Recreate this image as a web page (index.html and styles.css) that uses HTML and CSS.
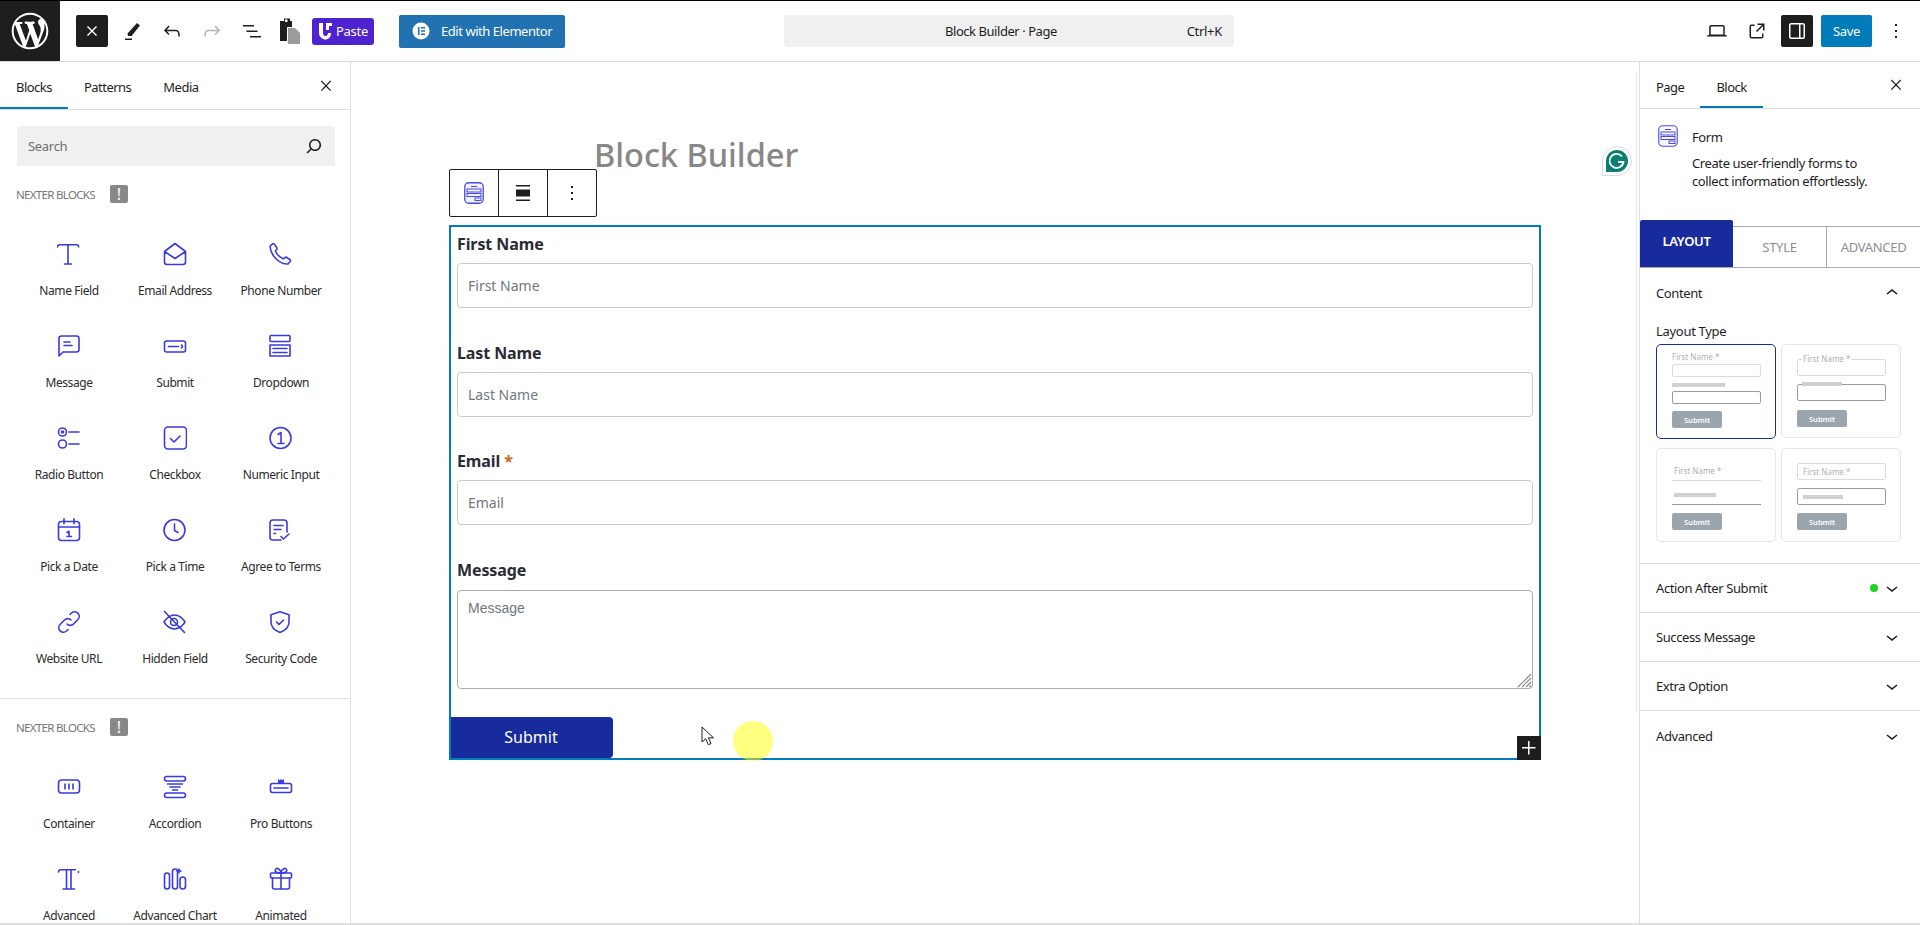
FILE: index.html
```html
<!DOCTYPE html>
<html lang="en">
<head>
<meta charset="utf-8">
<title>Block Builder</title>
<link rel="stylesheet" href="styles.css">
</head>
<body>
<div class="app">
<header class="topbar">
  <div class="wp-logo"><svg width="44" height="44" viewBox="-2 -2 24 24"><path fill="#fff" d="M20 10c0-5.51-4.49-10-10-10C4.48 0 0 4.49 0 10c0 5.52 4.48 10 10 10 5.51 0 10-4.48 10-10zM7.78 15.37L4.37 6.22c.55-.02 1.17-.08 1.17-.08.5-.06.44-1.13-.06-1.11 0 0-1.45.11-2.37.11-.18 0-.37 0-.58-.01C4.12 2.69 6.87 1.11 10 1.11c2.33 0 4.45.87 6.05 2.34-.68-.11-1.65.39-1.65 1.58 0 .74.45 1.36.9 2.1.35.61.55 1.36.55 2.46 0 1.49-1.4 5-1.4 5l-3.03-8.37c.54-.02.82-.17.82-.17.5-.05.44-1.25-.06-1.22 0 0-1.44.12-2.38.12-.87 0-2.33-.12-2.33-.12-.5-.03-.56 1.2-.06 1.22l.92.08 1.26 3.41zM17.41 10c.24-.64.74-1.87.43-4.25.7 1.29 1.05 2.71 1.05 4.25 0 3.29-1.73 6.24-4.4 7.78.97-2.59 1.94-5.2 2.92-7.78zM6.1 18.09C3.12 16.65 1.11 13.53 1.11 10c0-1.3.23-2.48.72-3.59C3.25 10.3 4.67 14.2 6.1 18.09zm4.03-6.63l2.58 6.98c-.86.29-1.76.45-2.71.45-.79 0-1.57-.11-2.29-.33.81-2.38 1.62-4.74 2.42-7.1z"/></svg></div>
  <div class="dark-btn close-btn"><svg width="24" height="24" viewBox="0 0 24 24"><path fill="#fff" d="M8 7l4 4 4-4 1 1-4 4 4 4-1 1-4-4-4 4-1-1 4-4-4-4z"/></svg></div>
  <div class="tools">
    <svg class="tool" viewBox="0 0 24 24"><path fill="#1e1e1e" d="M17 4l3 2.500-8.500 10.500h-3.500l-.5-2.500zM5 19.500h7v1.500h-7z"/></svg>
    <svg class="tool" viewBox="0 0 24 24"><path fill="#1e1e1e" d="M18.300 11.700c-.6-.6-1.400-.9-2.300-.9H6.700l2.900-3.300-1.100-1-4.500 5L8.500 16l1-1-2.700-2.700H16c.5 0 .9.200 1.300.5 1 1 1 3.400 1 4.500v.3h1.500v-.2c0-1.500 0-4.300-1.500-5.700z"/></svg>
    <svg class="tool" viewBox="0 0 24 24"><path fill="#b4b4b4" d="M15.600 6.500l-1.100 1 2.900 3.300H8c-.9 0-1.700.3-2.300.9-1.400 1.500-1.400 4.200-1.400 5.600v.2h1.500v-.3c0-1.100 0-3.500 1-4.500.3-.3.7-.5 1.300-.5h9.200L14.500 15l1.100 1.100 4.600-4.600-4.600-5z"/></svg>
    <svg class="tool" viewBox="0 0 24 24"><path fill="#1e1e1e" d="M3 6h11v1.500H3V6Zm3.500 5.500h11V13h-11v-1.500ZM21 17H10v1.500h11V17Z"/></svg>
  </div>
  <svg class="clip" width="24" height="28" viewBox="0 0 24 28"><path fill="#1e1e1e" d="M2 4h4V1.500h6V4h2v6h-5v14H2z"/><path fill="#9b9b9b" d="M10 11h7l5 5v11H10z"/><path fill="#fff" d="M7 2.500h2.500V5H7z"/></svg>
  <div class="paste"><svg width="16" height="20" viewBox="0 0 16 20"><path fill="#fff" d="M1 2h4v10c0 2 1 3 2.500 3S10 14 10 12h3c0 4-2.500 6.500-5.500 6.500S1 16 1 12z"/><path fill="#fff" d="M8 2h6v3H11v4H8z"/></svg><span>Paste</span></div>
  <div class="elementor"><svg width="18" height="18" viewBox="0 0 18 18"><circle cx="9" cy="9" r="8.500" fill="#fff"/><path fill="#2271b1" d="M6 5h1.500v8H6zM9 5h4v1.500H9zM9 8.250h4v1.500H9zM9 11.500h4V13H9z"/></svg><span>Edit with Elementor</span></div>
  <div class="command"><span class="command-title">Block Builder · Page</span><span class="command-key">Ctrl+K</span></div>
  <div class="top-right">
    <svg class="tool" viewBox="0 0 24 24"><path fill="#1e1e1e" d="M20.500 16h-.7V8c0-1.100-.9-2-2-2H6.200c-1.100 0-2 .9-2 2v8h-.7c-.8 0-1.500.7-1.500 1.500h20c0-.8-.7-1.500-1.500-1.500zM5.700 8c0-.3.2-.5.500-.5h11.600c.3 0 .5.2.5.5v7.600H5.700V8z"/></svg>
    <svg class="tool ext" viewBox="0 0 24 24"><path fill="#1e1e1e" d="M19.500 4.500h-7V6h4.440l-5.970 5.970 1.060 1.060L18 7.060v4.440h1.500v-7Zm-13 1a2 2 0 0 0-2 2v10a2 2 0 0 0 2 2h10a2 2 0 0 0 2-2v-3H17v3a.5.5 0 0 1-.5.5h-10a.5.5 0 0 1-.5-.5v-10a.5.5 0 0 1 .5-.5h3V5.500h-3Z"/></svg>
    <div class="dark-btn panel-btn"><svg width="24" height="24" viewBox="0 0 24 24"><path fill="#fff" d="M18 4H6c-1.100 0-2 .9-2 2v12c0 1.100.9 2 2 2h12c1.100 0 2-.9 2-2V6c0-1.100-.9-2-2-2zm-4 14.500H6c-.3 0-.5-.2-.5-.5V6c0-.3.2-.5.5-.5h8v13zm4.500-.5c0 .3-.2.5-.5.5h-2.500v-13H18c.3 0 .5.2.5.5v12z"/></svg></div>
    <div class="save">Save</div>
    <svg class="tool dots" viewBox="0 0 24 24"><path fill="#1e1e1e" d="M13 19h-2v-2h2v2zm0-6h-2v-2h2v2zm0-6h-2V5h2v2z"/></svg>
  </div>
</header>

<div class="workspace">
<aside class="inserter">
  <div class="tabs left-tabs">
    <div class="tab active">Blocks</div>
    <div class="tab">Patterns</div>
    <div class="tab">Media</div>
    <svg class="tab-close" width="20" height="20" viewBox="0 0 24 24"><path fill="#1e1e1e" d="M13 11.800l5.100-5.300-1-1-5.100 5.200-5.100-5.200-1 1 5.100 5.300-5.100 5.200 1 1 5.100-5.100 5.100 5.100 1-1z"/></svg>
  </div>
  <div class="search"><span>Search</span><svg width="24" height="24" viewBox="0 0 24 24"><path fill="#1e1e1e" d="M13 5c-3.300 0-6 2.700-6 6 0 1.400.5 2.700 1.300 3.700l-3.800 3.800 1.100 1.100 3.800-3.800c1 .8 2.300 1.300 3.700 1.300 3.300 0 6-2.700 6-6S16.300 5 13 5zm0 10.500c-2.500 0-4.500-2-4.500-4.500s2-4.500 4.500-4.500 4.500 2 4.500 4.500-2 4.500-4.500 4.500z"/></svg></div>
  <div class="group-head"><span>NEXTER BLOCKS</span><b class="badge">!</b></div>
  <div class="blocks divided">
    <div class="block"><svg class="ic" viewBox="0 0 24 24"><path d="M.5 5c0-1.500 1-2.200 2-2.200h17c1 0 2 .7 2 2.200M11 2.800V22M7.500 22h7"/></svg><span>Name Field</span></div>
    <div class="block"><svg class="ic" viewBox="0 0 24 24"><path d="M1.500 9.500 12 1.500l10.500 8V20a2.500 2.500 0 0 1-2.500 2.500H4A2.500 2.500 0 0 1 1.500 20ZM1.500 9.500 12 16.500l10.500-7"/></svg><span>Email Address</span></div>
    <div class="block"><svg class="ic" viewBox="0 0 24 24"><path d="M3.500 1.800 1.200 4C.5 12 10 22.500 19 22l2-2.200c.8-.9.500-1.800-.2-2.300l-3-2c-.8-.5-1.500-.4-2.100.2l-1.200 1.200C11 15.500 7.700 12 6.300 9l1.200-1.200c.6-.6.700-1.300.2-2.100l-2-3.200c-.5-.8-1.500-1.300-2.200-.7Z"/></svg><span>Phone Number</span></div>
    <div class="block"><svg class="ic" viewBox="0 0 24 24"><path d="M4.500 2h15A2.500 2.500 0 0 1 22 4.500v11a2.500 2.500 0 0 1-2.500 2.500H6l-4 4V4.500A2.500 2.500 0 0 1 4.500 2ZM7 8h6M7 11.500h8"/></svg><span>Message</span></div>
    <div class="block"><svg class="ic" viewBox="0 0 24 24"><rect x="1.500" y="7" width="21" height="11" rx="2"/><path d="M5.500 12.500h10M18.500 11l1 1.500-1 1.500"/></svg><span>Submit</span></div>
    <div class="block"><svg class="ic" viewBox="0 0 24 24"><rect x="1" y="1.500" width="20" height="6" rx="1"/><rect x="1" y="11" width="20" height="11"/><path d="M4 14.500h14M4 18.500h14"/></svg><span>Dropdown</span></div>
    <div class="block"><svg class="ic" viewBox="0 0 24 24"><circle cx="5.500" cy="6" r="4"/><circle class="dot" cx="5.500" cy="6" r="1.800"/><circle cx="5.500" cy="18" r="4"/><path d="M12 6h10M12 18h10"/></svg><span>Radio Button</span></div>
    <div class="block"><svg class="ic" viewBox="0 0 24 24"><rect x="1.500" y="1" width="22" height="22" rx="3.500"/><path d="M7.500 12.500l3.500 3.500 6-6"/></svg><span>Checkbox</span></div>
    <div class="block"><svg class="ic" viewBox="0 0 24 24"><circle cx="11.500" cy="12" r="10.500"/><path d="M9 8.500 12 6.500V17.500M9 17.500h6"/></svg><span>Numeric Input</span></div>
    <div class="block"><svg class="ic" viewBox="0 0 24 24"><rect x="1.500" y="3.500" width="21" height="19" rx="3"/><path d="M1.500 9h21M7 .8v5M17 .8v5M10 14.500l2-1.200v5.200M10 18.500h4.500"/></svg><span>Pick a Date</span></div>
    <div class="block"><svg class="ic" viewBox="0 0 24 24"><circle cx="11.500" cy="12" r="10.500"/><path d="M11.500 6v6.500l3.500 2"/></svg><span>Pick a Time</span></div>
    <div class="block"><svg class="ic" viewBox="0 0 24 24"><path d="M12 22H4a3 3 0 0 1-3-3V5a3 3 0 0 1 3-3h11a3 3 0 0 1 3 3v9M5 7.500h9M5 11.500h7M5 15.500h1.500M12 18.500l2.500 2.500 5.500-5"/></svg><span>Agree to Terms</span></div>
    <div class="block"><svg class="ic" viewBox="0 0 24 24"><path d="M10 14a4.500 4.500 0 0 0 6.500 0l4.500-4.500A4.600 4.600 0 0 0 14.500 3L13 4.500M14 10a4.500 4.500 0 0 0-6.500 0L3 14.500A4.600 4.600 0 0 0 9.500 21l1.500-1.500"/></svg><span>Website URL</span></div>
    <div class="block"><svg class="ic" viewBox="0 0 24 24"><path d="M1 12s4-7 10.500-7S22 12 22 12s-4 7-10.500 7S1 12 1 12Z"/><circle cx="11" cy="12" r="3.500"/><path d="M1.500 1.500 21.500 22.500"/></svg><span>Hidden Field</span></div>
    <div class="block"><svg class="ic" viewBox="0 0 24 24"><path d="M11 1.800l9 3v7.200c0 5-4 8.500-9 10.500-5-2-9-5.500-9-10.500V4.800ZM7.500 12l2.500 2.500 4.500-4.500"/></svg><span>Security Code</span></div>
  </div>
  <div class="group-head"><span>NEXTER BLOCKS</span><b class="badge">!</b></div>
  <div class="blocks">
    <div class="block"><svg class="ic" viewBox="0 0 24 24"><rect x="1.500" y="5" width="21" height="13" rx="3"/><path d="M8 9v5M12 9v5M16 9v5"/></svg><span>Container</span></div>
    <div class="block"><svg class="ic" viewBox="0 0 24 24"><rect x="1.500" y="1.500" width="21" height="4.500" rx="2.200"/><rect x="1.500" y="18" width="21" height="4.500" rx="2.200"/><path d="M4.500 9h15M7 12h10M9.500 15h5"/></svg><span>Accordion</span></div>
    <div class="block"><svg class="ic" viewBox="0 0 24 24"><rect x="1.500" y="8.500" width="21" height="9" rx="2"/><path d="M5 13h14"/><path class="fill" d="M9 8V4l2 1.500L12 3.500l1 2L15 4v4z"/></svg><span>Pro Buttons</span></div>
    <div class="block"><svg class="ic" viewBox="0 0 24 24"><path d="M1.500 5c0-1.500 1-2.200 2-2.200h15M9.500 2.800V22M14 2.800V22M6 22h11.500M21.500 4.500v1"/></svg><span>Advanced</span></div>
    <div class="block"><svg class="ic" viewBox="0 0 24 24"><rect x="1.500" y="6" width="5" height="16" rx="2.500"/><rect x="9.500" y="2" width="5" height="20" rx="2.500"/><rect x="17" y="10" width="5.500" height="12" rx="2.700"/><path d="M16 2v4M14 4h4"/></svg><span>Advanced Chart</span></div>
    <div class="block"><svg class="ic" viewBox="0 0 24 24"><rect x="1.500" y="6" width="21" height="5" rx="1"/><path d="M3.500 11v9a2 2 0 0 0 2 2h13a2 2 0 0 0 2-2v-9M12 6v16M12 6C8 6 5.500 5 6.500 2.500S11.500 2 12 6c.5-4 4.500-6 5.500-3.500S16 6 12 6Z"/></svg><span>Animated</span></div>
  </div>
</aside>

<main class="canvas">
  <h1 class="page-title">Block Builder</h1>
  <div class="block-toolbar">
    <div class="bt-cell"><svg width="20" height="22" viewBox="0 0 20 22"><rect x=".75" y=".75" width="18.500" height="20.500" rx="4" fill="#f1f1ff" stroke="#4b4be0" stroke-width="1.300"/><path d="M7 4.500h6" stroke="#4b4be0"/><rect x="3" y="7" width="14" height="3" fill="none" stroke="#4b4be0"/><rect x="3" y="11.500" width="14" height="3" fill="none" stroke="#4b4be0"/><rect x="11" y="16" width="6" height="2.500" fill="none" stroke="#4b4be0"/></svg></div>
    <div class="bt-cell"><svg width="24" height="24" viewBox="0 0 24 24"><path fill="#1e1e1e" d="M5 4h14v1.500H5zM5 8.500h14v7H5zM5 18.500h14V20H5z"/></svg></div>
    <div class="bt-cell"><svg width="24" height="24" viewBox="0 0 24 24"><path fill="#1e1e1e" d="M13 19h-2v-2h2v2zm0-6h-2v-2h2v2zm0-6h-2V5h2v2z"/></svg></div>
  </div>
  <form class="form-block">
    <div class="field"><label class="field-label">First Name</label><input class="field-input" placeholder="First Name"></div>
    <div class="field"><label class="field-label">Last Name</label><input class="field-input" placeholder="Last Name"></div>
    <div class="field"><label class="field-label">Email <i class="req">*</i></label><input class="field-input" placeholder="Email"></div>
    <div class="field last"><label class="field-label">Message</label>
      <div class="area-wrap"><textarea class="field-area" placeholder="Message"></textarea>
        <svg class="grip" width="15" height="15" viewBox="0 0 15 15"><path d="M1 14 14 1M5 14 14 5M9 14l5-5M12.500 14l1.500-1.500" stroke="#8a8a8a" stroke-width="1.200" fill="none"/></svg>
      </div>
    </div>
    <button type="button" class="submit-btn">Submit</button>
    <svg class="cursor" width="14" height="21" viewBox="0 0 14 21"><path d="M1 1v15l3.700-3.300 2.600 6 2.700-1.200-2.600-5.700H12.500Z" fill="#fff" stroke="#1e1e1e"/></svg>
    <div class="spot"></div>
    <div class="add-btn"><svg width="24" height="24" viewBox="0 0 24 24"><path fill="#fff" d="M11 12.500V18.500H12.500V12.500H18.500V11H12.500V5H11V11H5V12.500H11Z"/></svg></div>
  </form>
  <div class="grammarly"><svg width="24" height="24" viewBox="0 0 24 24"><path fill="#0a7f6f" d="M12 1a11 11 0 1 1 0 22H1V12A11 11 0 0 1 12 1Z"/><path d="M17 7.500a7 7 0 1 0 1.500 5.500H13" fill="none" stroke="#fff" stroke-width="1.800"/></svg></div>
  <div class="scroll-line"></div>
</main>

<aside class="settings">
  <div class="tabs right-tabs">
    <div class="tab">Page</div>
    <div class="tab active">Block</div>
    <svg class="tab-close" width="20" height="20" viewBox="0 0 24 24"><path fill="#1e1e1e" d="M13 11.800l5.100-5.300-1-1-5.100 5.200-5.100-5.200-1 1 5.100 5.300-5.100 5.200 1 1 5.100-5.100 5.100 5.100 1-1z"/></svg>
  </div>
  <div class="block-card">
    <svg width="20" height="22" viewBox="0 0 20 22"><rect x=".75" y=".75" width="18.500" height="20.500" rx="4" fill="#f8f8ff" stroke="#4b4be0" stroke-width="1.100"/><path d="M7 4.500h6" stroke="#4b4be0"/><rect x="3" y="7" width="14" height="3" fill="none" stroke="#4b4be0"/><rect x="3" y="11.500" width="14" height="3" fill="none" stroke="#4b4be0"/><rect x="11" y="16" width="6" height="2.500" fill="none" stroke="#4b4be0"/></svg>
    <div class="card-text"><div class="card-title">Form</div><p class="card-desc">Create user-friendly forms to collect information effortlessly.</p></div>
  </div>
  <div class="mode-tabs">
    <div class="mode active">LAYOUT</div>
    <div class="mode">STYLE</div>
    <div class="mode">ADVANCED</div>
  </div>
  <section class="content-panel">
    <div class="panel-row open"><span>Content</span><svg width="24" height="24" viewBox="0 0 24 24"><path fill="#1e1e1e" d="M6.500 12.400L12 8l5.500 4.400-.9 1.200L12 10l-4.500 3.600-1-1.200z"/></svg></div>
    <div class="layout-label">Layout Type</div>
    <div class="layouts">
      <div class="lay selected">
        <div class="lay-text">First Name *</div><div class="lay-box"></div><div class="lay-bar"></div><div class="lay-box dark"></div><div class="lay-btn">Submit</div>
      </div>
      <div class="lay float">
        <div class="lay-box"><span class="lay-text">First Name *</span></div><div class="lay-box dark"><span class="lay-bar"></span></div><div class="lay-btn">Submit</div>
      </div>
      <div class="lay line">
        <div class="lay-text">First Name *</div><div class="lay-rule"></div><div class="lay-bar"></div><div class="lay-rule dark"></div><div class="lay-btn">Submit</div>
      </div>
      <div class="lay inside">
        <div class="lay-box"><span class="lay-text">First Name *</span></div><div class="lay-box dark"><span class="lay-bar"></span></div><div class="lay-btn">Submit</div>
      </div>
    </div>
  </section>
  <div class="panel-row"><span>Action After Submit</span><i class="status"></i><svg width="24" height="24" viewBox="0 0 24 24"><path fill="#1e1e1e" d="M17.500 11.600L12 16l-5.500-4.400.9-1.200L12 14l4.500-3.600 1 1.200z"/></svg></div>
  <div class="panel-row"><span>Success Message</span><svg width="24" height="24" viewBox="0 0 24 24"><path fill="#1e1e1e" d="M17.500 11.600L12 16l-5.500-4.400.9-1.200L12 14l4.500-3.600 1 1.200z"/></svg></div>
  <div class="panel-row"><span>Extra Option</span><svg width="24" height="24" viewBox="0 0 24 24"><path fill="#1e1e1e" d="M17.500 11.600L12 16l-5.500-4.400.9-1.200L12 14l4.500-3.600 1 1.200z"/></svg></div>
  <div class="panel-row end"><span>Advanced</span><svg width="24" height="24" viewBox="0 0 24 24"><path fill="#1e1e1e" d="M17.500 11.600L12 16l-5.500-4.400.9-1.200L12 14l4.500-3.600 1 1.200z"/></svg></div>
</aside>
</div>
</div>
</body>
</html>
```
FILE: styles.css
```css
* { box-sizing: border-box; }
html, body { margin: 0; padding: 0; height: 100%; overflow: hidden; }
body { font-family: "Noto Sans", "Open Sans", sans-serif; font-size: 13px; color: #1e1e1e; background: #fff; }
.app { height: 925px; display: flex; flex-direction: column; border-bottom: 2px solid #e0e0e0; }

/* top bar */
.topbar { height: 62px; flex: none; display: flex; align-items: center; border-top: 1px solid #000; border-bottom: 1px solid #ddd; background: #fff; }
.wp-logo { width: 60px; height: 60px; background: #1e1e1e; display: flex; align-items: center; justify-content: center; flex: none; }
.dark-btn { width: 32px; height: 32px; background: #1e1e1e; border-radius: 2px; display: flex; align-items: center; justify-content: center; flex: none; }
.close-btn { margin-left: 16px; }
.tools { display: flex; gap: 16px; margin-left: 12px; }
.tool { width: 24px; height: 24px; flex: none; }
.clip { margin-left: 14px; flex: none; }
.paste { margin-left: 10px; width: 62px; height: 27px; border-radius: 3px; background: #4f22cf; color: #fff; display: flex; align-items: center; gap: 2px; padding-left: 6px; font-size: 13px; letter-spacing: -.3px; flex: none; }
.elementor { margin-left: 25px; width: 166px; height: 33px; border-radius: 2px; background: #2271b1; color: #fff; display: flex; align-items: center; gap: 11px; padding-left: 13px; font-size: 13px; letter-spacing: -.45px; flex: none; }
.command { margin-left: 219px; width: 450px; height: 32px; background: #f0f0f0; border-radius: 4px; display: flex; align-items: center; flex: none; padding-left: 161px; letter-spacing: -.45px; }
.command-title { flex: none; }
.command-key { margin-left: auto; margin-right: 12px; letter-spacing: -.3px; }
.top-right { margin-left: auto; display: flex; align-items: center; margin-right: 12px; }
.ext { margin-left: 16px; }
.panel-btn { margin-left: 12px; }
.save { margin-left: 8px; width: 51px; height: 32px; background: #007cba; color: #fff; border-radius: 2px; display: flex; align-items: center; justify-content: center; letter-spacing: -.3px; }
.dots { margin-left: 12px; }

/* workspace */
.workspace { flex: 1; min-height: 0; display: flex; }
.inserter { width: 351px; flex: none; border-right: 1px solid #ddd; overflow: hidden; }
.settings { width: 281px; flex: none; border-left: 1px solid #ddd; overflow: hidden; }
.canvas { flex: 1; min-width: 0; position: relative; padding-top: 79px; background: #fff; }

/* tabs */
.tabs { display: flex; align-items: stretch; position: relative; border-bottom: 1px solid #ddd; }
.left-tabs { height: 48px; }
.right-tabs { height: 47px; }
.tab { padding: 2px 16px 0; display: flex; align-items: center; letter-spacing: -.52px; }
.right-tabs .tab { padding-top: 3px; }
.tab.active { box-shadow: inset 0 -2px 0 #007cba; }
.tab-close { position: absolute; right: 14px; top: 14px; }
.right-tabs .tab-close { top: 13px; }

/* inserter */
.search { margin: 16px 15px 0 17px; height: 40px; background: #f0f0f0; border-radius: 2px; display: flex; align-items: center; justify-content: space-between; padding: 0 9px 0 11px; color: #6f6f6f; letter-spacing: -.3px; }
.group-head { margin: 19px 0 0 16px; height: 18px; display: flex; align-items: center; color: #757575; font-size: 11.500px; letter-spacing: -.68px; }
.badge { margin-left: 15px; width: 18px; height: 18px; background: #888; border-radius: 2px; color: #fff; display: flex; align-items: center; justify-content: center; font-size: 16px; font-weight: 400; letter-spacing: 0; }
.blocks { display: grid; grid-template-columns: repeat(3, 106px); padding: 27px 16px 0; grid-auto-rows: 92px; }
.blocks.divided { padding-bottom: 8px; border-bottom: 1px solid #e0e0e0; }
.block { display: flex; flex-direction: column; align-items: center; padding-top: 12px; gap: 16px; font-size: 12px; line-height: 18px; letter-spacing: -.42px; color: #2b2b2b; white-space: nowrap; }
.ic { width: 24px; height: 24px; flex: none; fill: none; stroke: #3a3adf; stroke-width: 1.6; stroke-linecap: round; stroke-linejoin: round; }
.ic .dot, .ic .fill { fill: #3a3adf; stroke: none; }

/* canvas */
.page-title { margin: 0 0 0 243px; font-size: 32.500px; line-height: 28px; font-weight: 500; color: #878787; letter-spacing: 0; }
.block-toolbar { margin-left: 98px; width: 148px; height: 48px; display: flex; border: 1px solid #1e1e1e; border-radius: 2px; background: #fff; }
.bt-cell { flex: 1; display: flex; align-items: center; justify-content: center; }
.bt-cell + .bt-cell { border-left: 1px solid #1e1e1e; }
.form-block { margin: 8px 0 0 98px; width: 1092px; height: 535px; border: 2px solid #007cba; position: relative; padding-top: 5px; }
.field { padding: 0 6px; margin-bottom: 32.670px; }
.field.last { margin-bottom: 0; }
.field-label { display: block; font-size: 16px; line-height: 24px; font-weight: 700; margin-bottom: 7px; color: #2b2b33; letter-spacing: -.1px; }
.req { color: #d0641c; font-style: normal; }
.field-input { display: block; width: 100%; height: 45px; border: 1px solid #ccc; border-radius: 4px; padding: 0 10px; font: 14px "Noto Sans", sans-serif; color: #333; background: #fff; outline: none; }
.field-input::placeholder { color: #6f7780; }
.area-wrap { position: relative; height: 99px; margin-top: 8px; }
.field-area { display: block; width: 100%; height: 99px; border: 1px solid #adadad; border-radius: 4px; padding: 9px 10px; font: 14px "Liberation Sans", sans-serif; resize: none; outline: none; background: #fff; }
.field-area::placeholder { color: #6f7780; }
.grip { position: absolute; right: 1px; bottom: 1px; }
.submit-btn { display: block; margin-top: 28px; width: 162px; height: 41px; border: 0; border-radius: 0 4px 4px 0; background: #182b9c; color: #fff; font: 16px "Noto Sans", sans-serif; padding: 0 2px 0 0; }
.cursor { position: absolute; left: 250px; top: 499px; }
.spot { position: absolute; left: 282px; top: 494px; width: 40px; height: 40px; border-radius: 50%; background: rgba(255, 255, 0, .5); }
.add-btn { position: absolute; right: -2px; bottom: -2px; width: 24px; height: 24px; background: #1e1e1e; display: flex; align-items: center; justify-content: center; }
.grammarly { position: absolute; left: 1251px; top: 84px; width: 30px; height: 30px; background: #fff; border: 1px solid #d9dbe6; border-radius: 50% 50% 50% 0; display: flex; align-items: center; justify-content: center; }
.scroll-line { position: absolute; right: 2px; top: 10px; height: 640px; width: 1px; background: #e4e4e8; }

/* settings */
.block-card { height: 111px; padding: 16px 0 0 18px; display: flex; gap: 14px; align-items: flex-start; }
.card-text { width: 200px; margin-top: 3px; }
.card-title { line-height: 18px; letter-spacing: -.4px; }
.card-desc { margin: 8px 0 0; line-height: 18px; letter-spacing: -.4px; }
.mode-tabs { display: grid; grid-template-columns: 93px 93px 94px; height: 48px; border-bottom: 1px solid #aaa; align-items: end; }
.mode { height: 41px; border-top: 1px solid #aaa; border-left: 1px solid #aaa; display: flex; align-items: center; justify-content: center; font-size: 13px; color: #8a8f96; letter-spacing: -.3px; }
.mode.active { height: 47px; align-self: start; background: #182b9c; color: #fff; font-weight: 600; border: 0; border-radius: 2px 2px 0 0; padding-bottom: 6px; }
.mode.active + .mode { border-left: 0; }
.content-panel { border-bottom: 1px solid #ddd; height: 296px; }
.panel-row { height: 49px; padding: 0 16px; display: flex; align-items: center; border-bottom: 1px solid #ddd; letter-spacing: -.4px; }
.panel-row span { margin-right: auto; }
.panel-row.open { height: 50px; border-bottom: 0; }
.panel-row.end { border-bottom: 0; }
.panel-row svg { flex: none; }
.status { width: 8px; height: 8px; border-radius: 50%; background: #1ed41e; margin-right: 2px; }
.layout-label { margin: 4px 0 4px 16px; line-height: 18px; letter-spacing: -.3px; }
.layouts { display: grid; grid-template-columns: 120px 120px; gap: 9px 5px; padding-left: 16px; }
.lay { height: 94px; border: 1px solid #e6e6e6; border-radius: 5px; padding: 6px 15px 0; display: flex; flex-direction: column; }
.lay.selected { height: 95px; border-color: #182b9c; }
.lay-text { font-size: 8px; line-height: 12px; color: #aeb2b7; letter-spacing: 0; white-space: nowrap; }
.lay-box { width: 89px; height: 13px; border: 1px solid #dcdcdc; border-radius: 2px; margin-top: 1px; flex: none; display: flex; align-items: center; }
.lay-box.dark { border-color: #9b9b9b; margin-top: 4px; }
.lay-bar { display: block; width: 53px; height: 4px; background: #d0d0d0; margin-top: 6px; flex: none; }
.lay-btn { width: 50px; height: 17px; background: #9aa5ae; color: #fff; border-radius: 2px; font-size: 7.500px; font-weight: 600; display: flex; align-items: center; justify-content: center; margin-top: 7px; flex: none; }
.lay-rule { width: 89px; height: 1px; background: #dcdcdc; flex: none; margin-top: 3px; }
.lay-rule.dark { background: #9b9b9b; margin-top: 7px; }
.lay.float { padding-top: 14px; }
.lay.float .lay-box { height: 17px; margin-top: 0; }
.lay.float .lay-box.dark { margin-top: 8px; }
.lay.float .lay-text { background: #fff; margin: -17px 0 0 4px; padding: 0 1px; line-height: 10px; }
.lay.float .lay-bar { width: 40px; margin: -17px 0 0 4px; }
.lay.float .lay-btn { margin-top: 9px; }
.lay.line { padding-top: 16px; }
.lay.line .lay-text { padding-left: 2px; }
.lay.line .lay-bar { width: 42px; margin: 12px 0 0 2px; }
.lay.line .lay-btn { margin-top: 8px; }
.lay.inside { padding-top: 14px; }
.lay.inside .lay-box { height: 17px; margin-top: 0; padding-left: 5px; }
.lay.inside .lay-box.dark { margin-top: 8px; }
.lay.inside .lay-bar { width: 40px; margin: 0; }
.lay.inside .lay-btn { margin-top: 8px; }
```
